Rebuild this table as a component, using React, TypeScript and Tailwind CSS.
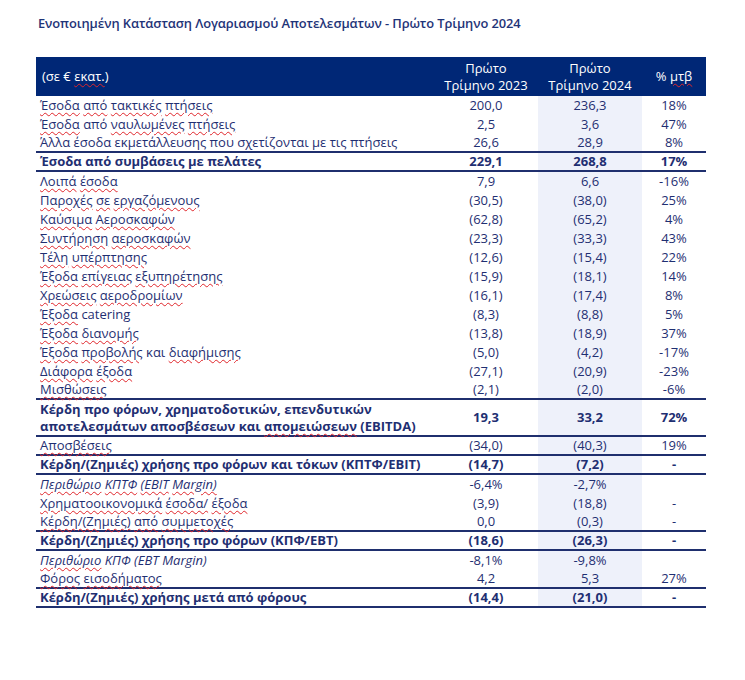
import React from "react";

type Row = {
  label: string[];
  a: string;
  b: string;
  c: string;
  bold?: boolean;
  italic?: boolean;
  border?: boolean;
  tall?: boolean;
};

const rows: Row[] = [
  { label: ["~Έσοδα ~από ~τακτικές ~πτήσεις"], a: "200,0", b: "236,3", c: "18%" },
  { label: ["~Έσοδα από ~ναυλωμένες ~πτήσεις"], a: "2,5", b: "3,6", c: "47%" },
  { label: ["Άλλα έσοδα εκμετάλλευσης που σχετίζονται με τις πτήσεις"], a: "26,6", b: "28,9", c: "8%", border: true },
  { label: ["Έσοδα από συμβάσεις με πελάτες"], a: "229,1", b: "268,8", c: "17%", bold: true, border: true },
  { label: ["~Λοιπά ~έσοδα"], a: "7,9", b: "6,6", c: "-16%" },
  { label: ["~Παροχές ~σε ~εργαζόμενους"], a: "(30,5)", b: "(38,0)", c: "25%" },
  { label: ["~Καύσιμα ~Αεροσκαφών"], a: "(62,8)", b: "(65,2)", c: "4%" },
  { label: ["~Συντήρηση ~αεροσκαφών"], a: "(23,3)", b: "(33,3)", c: "43%" },
  { label: ["~Τέλη ~υπέρπτησης"], a: "(12,6)", b: "(15,4)", c: "22%" },
  { label: ["~Έξοδα ~επίγειας ~εξυπηρέτησης"], a: "(15,9)", b: "(18,1)", c: "14%" },
  { label: ["~Χρεώσεις ~αεροδρομίων"], a: "(16,1)", b: "(17,4)", c: "8%" },
  { label: ["~Έξοδα catering"], a: "(8,3)", b: "(8,8)", c: "5%" },
  { label: ["~Έξοδα ~διανομής"], a: "(13,8)", b: "(18,9)", c: "37%" },
  { label: ["~Έξοδα ~προβολής και ~διαφήμισης"], a: "(5,0)", b: "(4,2)", c: "-17%" },
  { label: ["~Διάφορα ~έξοδα"], a: "(27,1)", b: "(20,9)", c: "-23%" },
  { label: ["~Μισθώσεις"], a: "(2,1)", b: "(2,0)", c: "-6%", border: true },
  {
    label: [
      "Κέρδη προ φόρων, χρηματοδοτικών, επενδυτικών",
      "αποτελεσμάτων αποσβέσεων και ~απομειώσεων (EBITDA)",
    ],
    a: "19,3",
    b: "33,2",
    c: "72%",
    bold: true,
    border: true,
    tall: true,
  },
  { label: ["~Αποσβέσεις"], a: "(34,0)", b: "(40,3)", c: "19%", border: true },
  { label: ["Κέρδη/(Ζημιές) χρήσης προ φόρων και τόκων (ΚΠΤΦ/EBIT)"], a: "(14,7)", b: "(7,2)", c: "-", bold: true, border: true },
  { label: ["~Περιθώριο ~ΚΠΤΦ ~(EBIT ~Margin)"], a: "-6,4%", b: "-2,7%", c: "", italic: true },
  { label: ["~Χρηματοοικονομικά ~έσοδα/ ~έξοδα"], a: "(3,9)", b: "(18,8)", c: "-" },
  { label: ["~Κέρδη/(Ζημιές) ~από ~συμμετοχές"], a: "0,0", b: "(0,3)", c: "-", border: true },
  { label: ["Κέρδη/(Ζημιές) χρήσης προ φόρων (ΚΠΦ/EBT)"], a: "(18,6)", b: "(26,3)", c: "-", bold: true, border: true },
  { label: ["~Περιθώριο ΚΠΦ (EBT Margin)"], a: "-8,1%", b: "-9,8%", c: "", italic: true },
  { label: ["~Φόρος ~εισοδήματος"], a: "4,2", b: "5,3", c: "27%", border: true },
  { label: ["Κέρδη/(Ζημιές) χρήσης μετά από φόρους"], a: "(14,4)", b: "(21,0)", c: "-", bold: true, border: true },
];

function Words({ text }: { text: string }) {
  const parts = text.split(" ");
  return (
    <>
      {parts.map((w, i) => {
        const sq = w.startsWith("~");
        const word = sq ? w.slice(1) : w;
        return (
          <React.Fragment key={i}>
            {sq ? (
              <span className="underline decoration-wavy decoration-[#e0262b] decoration-1 underline-offset-[2px]">
                {word}
              </span>
            ) : (
              word
            )}
            {i < parts.length - 1 ? " " : ""}
          </React.Fragment>
        );
      })}
    </>
  );
}

export default function App() {
  return (
    <div className="w-[745px] h-[680px] bg-white font-[family-name:'Open_Sans','Noto_Sans',sans-serif] text-[#1f2f72]">
      <div className="pl-[38px] pt-[14px] text-[12.9px] font-semibold text-[#1f3478] leading-[18px] tracking-[-0.1px]">
        Ενοποιημένη Κατάσταση Λογαριασμού Αποτελεσμάτων - Πρώτο Τρίμηνο 2024
      </div>
      <div className="ml-[36px] mt-[25px] w-[670px]">
        <div className="grid grid-cols-[398px_104px_104px_64px] h-[39px] bg-[#002776] text-white text-[13px] leading-[17px]">
          <div className="flex items-center pl-[6px]">
            <span>
              (σε € <Words text="~εκατ." />)
            </span>
          </div>
          <div className="flex flex-col items-center justify-center text-center">
            <span>Πρώτο</span>
            <span>Τρίμηνο 2023</span>
          </div>
          <div className="flex flex-col items-center justify-center text-center">
            <span>Πρώτο</span>
            <span>Τρίμηνο 2024</span>
          </div>
          <div className="flex items-center justify-center">
            <span>
              % <Words text="~μτβ" />
            </span>
          </div>
        </div>
        {rows.map((r, i) => (
          <div
            key={i}
            className={`grid grid-cols-[398px_104px_104px_64px] text-[13px] ${
              r.tall ? "h-[37px] leading-[17px]" : "h-[19px] leading-[17px]"
            } ${r.border ? "border-b-2 border-[#1f2f6e]" : ""} ${r.bold ? "font-bold" : ""}`}
          >
            <div className={`flex flex-col justify-center pl-[4px] whitespace-nowrap ${r.italic ? "italic" : ""}`}>
              {r.label.map((l, j) => (
                <div key={j}>
                  <Words text={l} />
                </div>
              ))}
            </div>
            <div className="flex items-center justify-center">{r.a}</div>
            <div className="flex items-center justify-center bg-[#eef1fa]">{r.b}</div>
            <div className="flex items-center justify-center">{r.c}</div>
          </div>
        ))}
      </div>
    </div>
  );
}
